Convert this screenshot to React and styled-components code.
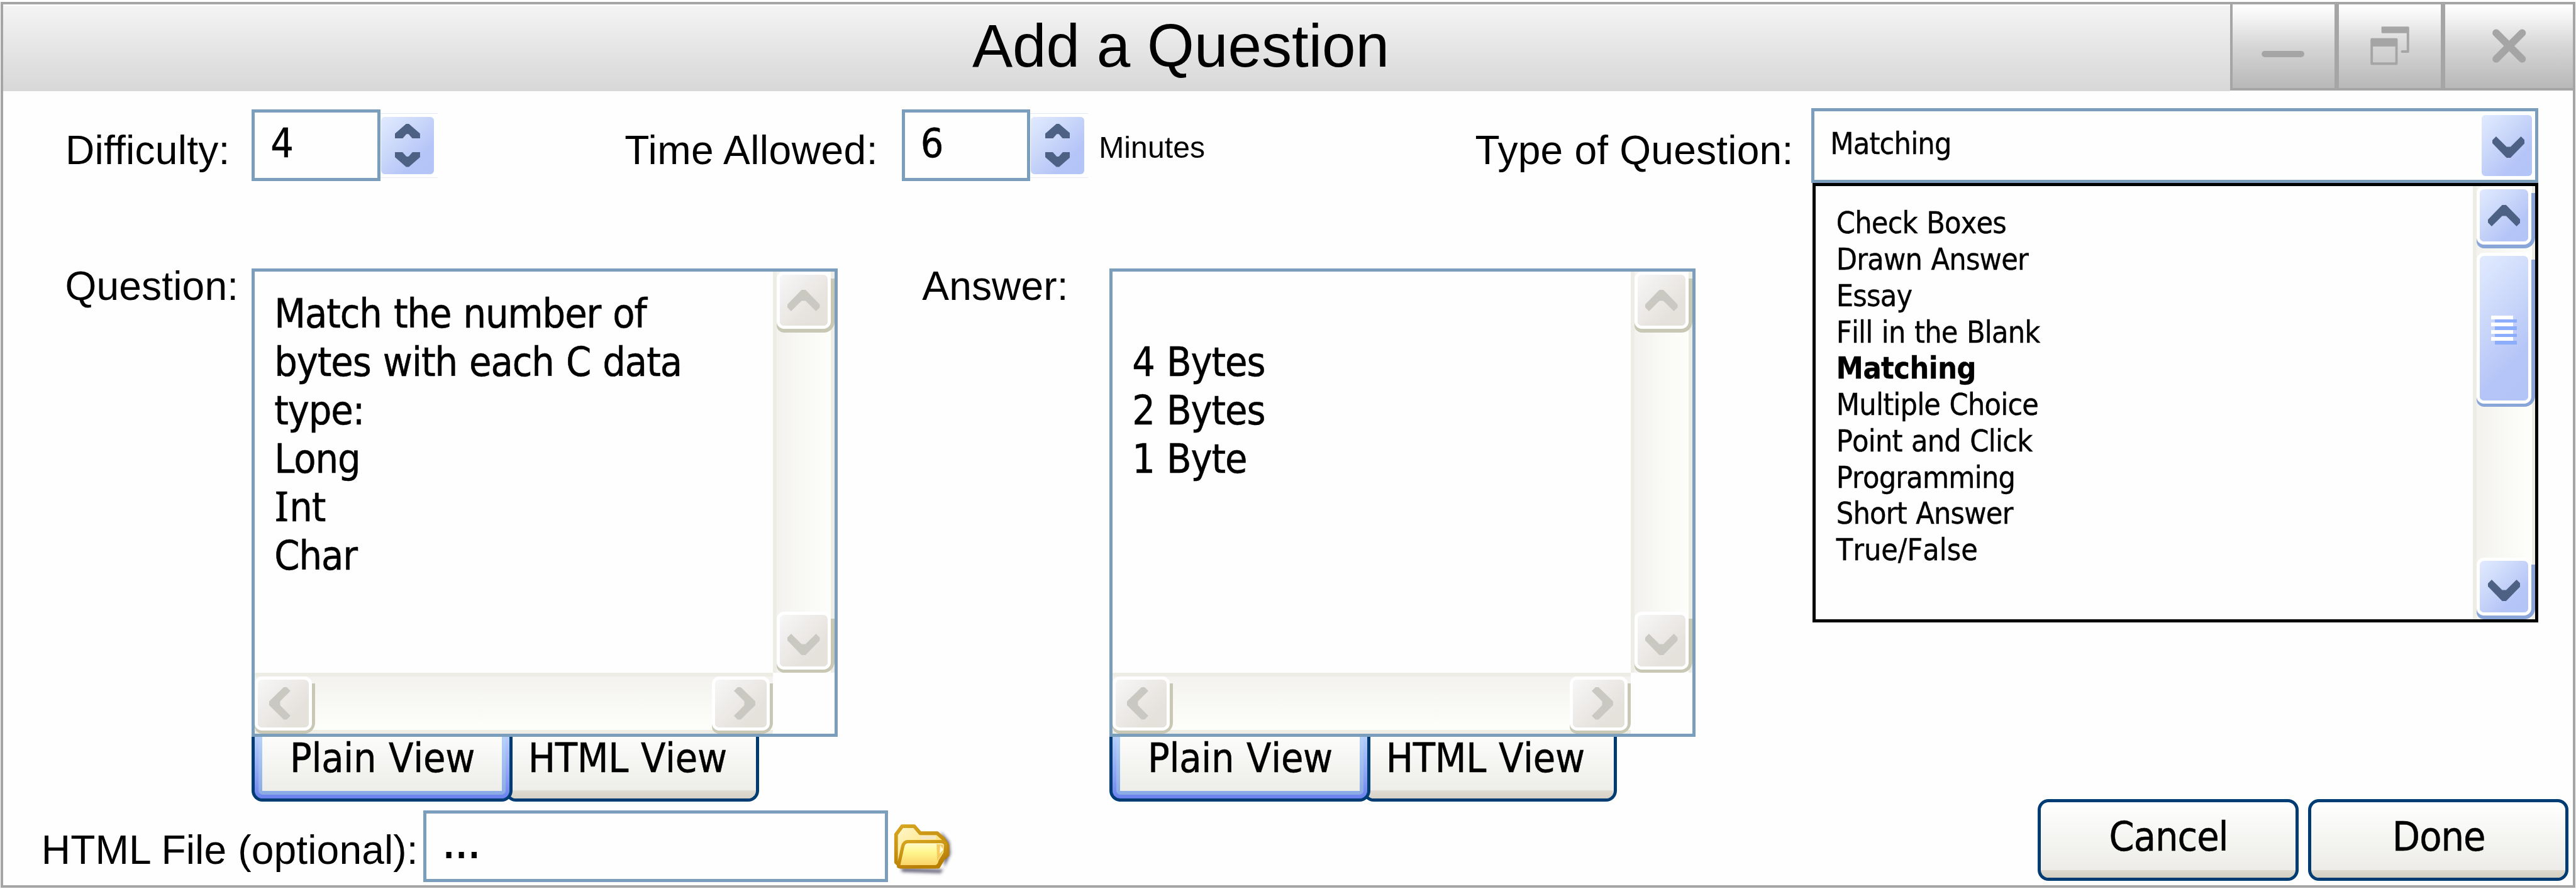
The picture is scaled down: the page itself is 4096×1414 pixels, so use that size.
import React from "react";
import styled, { createGlobalStyle, css } from "styled-components";

/* Design units: the dialog is laid out on a 4257-unit wide sheet. */
const SCALE = 4096 / 4257;
const u = (n) => `${(n * SCALE).toFixed(3)}px`;

const ARIAL = `"Liberation Sans", Arial, sans-serif`;
const TAHOMA = `"DejaVu Sans Condensed", "DejaVu Sans", sans-serif`;

const GlobalStyle = createGlobalStyle`
  *, *::before, *::after { box-sizing: border-box; }
  body { margin: 0; background: #fefefe; overflow: hidden; }
  svg { display: block; }
`;

const tahoma = css`
  font-family: ${TAHOMA};
  font-stretch: condensed;
  font-kerning: none;
  letter-spacing: -0.017em;
  word-spacing: 0.03em;
  -webkit-text-stroke: 0.008em #000;
  color: #000;
  white-space: pre;
`;

const Window = styled.main`
  width: 4094px;
  height: 1409px;
  margin: 3px 1px 2px;
  border: 4px solid #a5a5a5;
  background: #fefefe;
  display: flex;
  flex-direction: column;
`;

/* ---------- title bar ---------- */

const TitleBar = styled.header`
  height: ${u(143.7)};
  flex: none;
  display: flex;
  align-items: flex-start;
`;

const TitleFill = styled.div`
  flex: 1;
  height: 100%;
  border-top: 2px solid #fff;
  background: linear-gradient(#f4f4f4, #d7d7d7);
`;

const Title = styled.h1`
  margin: ${u(6)} 0 0 ${u(1601.5)};
  font: 400 ${u(100)} / ${u(120)} ${ARIAL};
  color: #000;
  white-space: nowrap;
`;

const WindowButton = styled.div`
  width: ${(p) => u(p.$w)};
  height: ${u(142.4)};
  border-left: ${(p) => p.$edge}px solid #a5a5a5;
  border-bottom: 4px solid #a5a5a5;
  background: linear-gradient(#fff 0%, #f4f4f4 15%, #d6d6d6 50%, #b8b8b8 100%);
`;

/* ---------- rows ---------- */

const Row = styled.section`
  display: flex;
  align-items: flex-start;
  flex: none;
  height: ${(p) => u(p.$h)};
  padding-left: ${(p) => u(p.$left)};
`;

const Label = styled.label`
  flex: none;
  width: ${(p) => u(p.$w)};
  margin-top: ${(p) => u(p.$top || 0)};
  margin-left: ${(p) => u(p.$gap || 0)};
  font: 400 ${(p) => u(p.$size || 66.67)} / ${(p) => u((p.$size || 66.67) * 1.2)} ${ARIAL};
  letter-spacing: ${(p) => p.$tracking || 0.002}em;
  color: #000;
  white-space: nowrap;
`;

const Field = styled.div`
  ${tahoma}
  flex: none;
  width: ${(p) => u(p.$w)};
  height: ${u(118.3)};
  margin-top: ${(p) => u(p.$top)};
  padding: ${(p) => u(p.$pad)} 0 0 ${(p) => u(p.$indent)};
  border: 5px solid #7b9ebd;
  background: #fefefe;
  font-size: ${u(66.67)};
  line-height: ${u(80)};
`;

const FileField = styled(Field)`
  letter-spacing: 0.03em;
  -webkit-text-stroke: 0.035em #000;
`;

const Stepper = styled.div`
  flex: none;
  width: ${u(95)};
  height: ${u(107)};
  margin-top: ${u(36)};
  padding: ${u(5)} ${u(6.3)} 0 ${u(0.8)};
  border-top: 1px solid #dfe7f8;
  border-bottom: 1px solid #e8ebf6;
`;

const blueFace = "linear-gradient(135deg, #e1eafe 0%, #cbd8fa 38%, #b5c5f7 72%, #b3c4f6 100%)";

const StepperFace = styled.div`
  height: ${u(95)};
  border-radius: ${u(6)};
  background: ${blueFace};
  display: flex;
  flex-direction: column;
  align-items: center;
  justify-content: space-between;
  padding: ${u(11.7)} 0 ${u(12)};
`;

/* ---------- combo box ---------- */

const Combo = styled.div`
  position: relative;
  flex: none;
  width: ${u(1202)};
  margin-top: ${u(27.4)};
`;

const ComboField = styled.div`
  ${tahoma}
  display: flex;
  justify-content: space-between;
  height: ${u(124.5)};
  padding: ${u(7)} ${u(6)} ${u(6)} ${u(26.3)};
  border: 5px solid #7b9ebd;
  background: #fefefe;
  font-size: ${u(50)};
  line-height: ${u(60)};
`;

const ComboValue = styled.span`
  margin-top: ${u(17.6)};
`;

const ComboButton = styled.div`
  width: ${u(83)};
  height: ${u(100.4)};
  border-radius: ${u(6)};
  background: ${blueFace};
  padding: ${u(35.3)} 0 0 ${u(17.4)};
`;

const Menu = styled.div`
  position: absolute;
  top: ${u(124.5)};
  left: ${u(2.5)};
  right: 0;
  height: ${u(725.9)};
  border: 5px solid #000;
  background: #fefefe;
  display: flex;
  justify-content: space-between;
`;

const Options = styled.ul`
  ${tahoma}
  list-style: none;
  margin: 0;
  padding: ${u(31.2)} 0 0 ${u(33.8)};
  font-size: ${u(50)};
  line-height: ${u(60)};
`;

const Option = styled.li`
  font-weight: ${(p) => (p.$selected ? 700 : 400)};
  letter-spacing: ${(p) => (p.$tracking === undefined ? "inherit" : `${p.$tracking}em`)};
`;

/* ---------- scroll bars ---------- */

const ScrollBar = styled.div`
  flex: none;
  display: flex;
  justify-content: space-between;
  ${(p) =>
    p.$horizontal
      ? css`
          width: ${u(856.5)};
          height: ${u(101)};
          padding-top: ${u(6)};
          background: linear-gradient(
            #eeede5 ${u(6)}, #f3f2ee ${u(6)}, #fdfefa ${u(90)}, #fdfefa ${u(95)}, #eeede5 ${u(95)}
          );
        `
      : css`
          flex-direction: column;
          width: ${u(p.$w || 101.5)};
          height: 100%;
          padding-left: ${u(6)};
          background: linear-gradient(
            to right,
            #eeede5 ${u(6)}, #f3f2ee ${u(6)}, #fdfefa ${u(90)}, #fdfefa ${u((p.$w || 101.5) - 6)},
            #eeede5 ${u((p.$w || 101.5) - 6)}
          );
        `}
`;

const ScrollButton = styled.div`
  flex: none;
  width: ${(p) => u(p.$w || 95)};
  height: ${(p) => u(p.$h || 101)};
  padding: 0 ${u(5.7)} ${u(5.7)} 0;
  border-radius: 0 0 ${u(18)} ${u(12)};
  margin-top: ${(p) => u(p.$gap || 0)};
  margin-bottom: ${(p) => (p.$push ? "auto" : 0)};
  background: linear-gradient(transparent ${u(11.7)}, ${(p) => (p.$active ? "#8aa6d9" : "#c8c8b5")} ${u(11.7)});
`;

const FACE_NUDGE = {
  down: `padding-top: ${u(12.6)};`,
  left: `padding-right: ${u(12)};`,
  right: `padding-left: ${u(13)};`,
};

const ScrollFace = styled.div`
  width: 100%;
  height: 100%;
  border: ${u(6)} solid #fff;
  border-radius: ${u(12)};
  background: ${(p) =>
      p.$active ? blueFace : "linear-gradient(135deg, #f7f7f7 0%, #ebe8e5 50%, #e5e2dc 75%, #e5e2dc 100%)"}
    padding-box;
  display: flex;
  align-items: center;
  justify-content: center;
  ${(p) => FACE_NUDGE[p.$dir] || ""}
`;

const Grip = styled.div`
  display: flex;
  flex-direction: column;
  margin: ${u(6)} ${u(0.5)} 0 0;
`;

const GripLine = styled.i`
  width: ${u(36.5)};
  height: ${u(5.98)};
  margin-left: ${(p) => u(p.$dark ? 6 : 0)};
  margin-right: ${(p) => u(p.$dark ? 0 : 6)};
  background: ${(p) => (p.$dark ? "#8cadfb" : "#fff")};
`;

/* ---------- text editors ---------- */

const Editor = styled.div`
  flex: none;
  width: ${u(968.5)};
  margin-top: ${u(10.6)};
`;

const EditorBox = styled.div`
  height: ${u(775)};
  border: 5px solid #7b9ebd;
  background: #fefefe;
  display: flex;
  flex-direction: column;
`;

const EditorMain = styled.div`
  height: ${u(663.5)};
  display: flex;
  justify-content: space-between;
`;

const EditorText = styled.div`
  ${tahoma}
  padding: ${u(31)} 0 0 ${u(32.2)};
  font-size: ${u(66.67)};
  line-height: ${u(79.9)};
`;

const Line = styled.div`
  height: ${u(79.9)};
`;

const SerifI = styled.span`
  font-family: "Noto Sans", sans-serif;
  font-stretch: normal;
  font-size: 1.02em;
  line-height: 0;
  margin-left: 0.01em;
  letter-spacing: 0;
`;

const Rest = styled.span`
  margin-left: 0.02em;
`;

const Tabs = styled.div`
  display: flex;
`;

const Tab = styled.div`
  ${tahoma}
  position: relative;
  flex: none;
  height: ${u(106.3)};
  border: 5px solid #003c74;
  border-top: 0;
  border-radius: 0 0 ${u(18)} ${u(18)};
  font-size: ${u(66.67)};
  line-height: ${u(70)};
  letter-spacing: -0.005em;
`;

const ActiveTab = styled(Tab)`
  z-index: 1;
  width: ${u(431)};
  padding: 0 ${u(6)} ${u(6)};
  background: linear-gradient(#b6cdfb, #8fa4f6 60%, #6b82ee);
`;

const ActiveRing = styled.div`
  height: 100%;
  padding: 0 ${u(6)} ${u(6)};
  border-radius: 0 0 ${u(7)} ${u(7)};
  background: linear-gradient(#b6d2f9, #8aaae4);
`;

const ActiveFace = styled.div`
  height: 100%;
  padding-left: ${u(46)};
  background: linear-gradient(#fcfcfb, #edede9);
`;

const PlainTab = styled(Tab)`
  width: ${u(419)};
  margin-left: ${u(-12)};
  padding-left: ${u(32.6)};
  background: linear-gradient(#fcfcfb, #edede9 ${u(88.4)}, #e1dcd4 ${u(88.4)}, #d6d2c6);
`;

/* ---------- bottom row ---------- */

const FolderSlot = styled.div`
  flex: none;
  margin: ${u(36)} 0 0 ${u(7)};
`;

const Actions = styled.div`
  display: flex;
  gap: ${u(15.8)};
  margin-left: auto;
  margin-right: ${u(7)};
`;

const PushButton = styled.button`
  ${tahoma}
  width: ${u(430.6)};
  height: ${u(135.6)};
  padding: 0 0 ${u(9.5)} ${u(1)};
  border: 5px solid #003c74;
  border-radius: ${u(18)};
  background: linear-gradient(#fff, #f4f4f1 50%, #edece8 ${u(112)}, #dedacf ${u(112)}, #d3cfc3);
  font-size: ${u(66.67)};
  line-height: ${u(80)};
  text-align: center;
`;

/* ---------- drawings ---------- */

const ARROW = "0,11.2 0,6.2 6.2,0 23.5,17.2 30,17.2 47.3,0 53.5,6.2 53.5,11.2 30,35.3 23.5,35.3";
const TURN = { down: 0, up: 180, left: 90, right: 270 };

function Arrow({ dir, color }) {
  const side = dir === "left" || dir === "right";
  const w = side ? 35.3 : 53.5;
  const h = side ? 53.5 : 35.3;
  return (
    <svg width={w * SCALE} height={h * SCALE} viewBox={`${-w / 2} ${-h / 2} ${w} ${h}`}>
      <g transform={`rotate(${TURN[dir]})`}>
        <polygon points={ARROW} fill={color} transform="translate(-26.75 -17.65)" />
      </g>
    </svg>
  );
}

function StepArrow({ down }) {
  return (
    <svg width={41.5 * SCALE} height={24.3 * SCALE} viewBox="0 0 41.5 24.3">
      <polygon
        points="0,16 18.5,0 23,0 41.5,16 41.5,24.3 29,24.3 22.5,17 19,17 12.5,24.3 0,24.3"
        fill="#4d6185"
        transform={down ? "matrix(1 0 0 -1 0 24.3)" : undefined}
      />
    </svg>
  );
}

function MinimizeGlyph() {
  return (
    <svg width="100%" height="100%" viewBox="3689 7.3 170 138" preserveAspectRatio="xMinYMin meet">
      <rect x="3737.5" y="84.8" width="71" height="10.7" rx="5.3" fill="#a5a5a5" />
    </svg>
  );
}

function RestoreGlyph() {
  return (
    <svg width="100%" height="100%" viewBox="3864 7.3 170 138" preserveAspectRatio="xMinYMin meet">
      <path
        d="M3936.5 44.2h43a1.8 1.8 0 0 1 1.8 1.8v40.4a1.8 1.8 0 0 1-1.8 1.8h-10a2.1 2.1 0 0 1 0-4.2h7.7V55.3h-40.7a1.5 1.5 0 0 1-1.5-1.5v-8.1a1.5 1.5 0 0 1 1.5-1.5z"
        fill="#a5a5a5"
      />
      <path
        fillRule="evenodd"
        d="M3918.5 63.8h41.8a1.8 1.8 0 0 1 1.8 1.8v41a1.8 1.8 0 0 1-1.8 1.8h-41.8a1.8 1.8 0 0 1-1.8-1.8v-41a1.8 1.8 0 0 1 1.8-1.8zM3920.8 77.7v26.4h37.3V77.7z"
        fill="#a5a5a5"
      />
    </svg>
  );
}

function CloseGlyph() {
  return (
    <svg width="100%" height="100%" viewBox="4040.6 7.3 213 138" preserveAspectRatio="xMinYMin meet">
      <path d="M4125.5 54.9L4168.8 98.3M4168.8 54.9L4125.5 98.3" stroke="#a5a5a5" strokeWidth="12.4" strokeLinecap="round" />
    </svg>
  );
}

function FolderIcon() {
  return (
    <svg width={102 * SCALE} height={92 * SCALE} viewBox="0 0 102 92">
      <defs>
        <linearGradient id="folderBack" x1="0" y1="0" x2="1" y2="1">
          <stop offset="0" stopColor="#fff6cf" />
          <stop offset="0.5" stopColor="#fde98d" />
          <stop offset="1" stopColor="#efb13c" />
        </linearGradient>
        <linearGradient id="folderFront" x1="0" y1="0" x2="0" y2="1">
          <stop offset="0" stopColor="#fffbd6" />
          <stop offset="0.4" stopColor="#fff790" />
          <stop offset="1" stopColor="#fbcf64" />
        </linearGradient>
        <linearGradient id="folderEdge" x1="0" y1="0" x2="0.4" y2="1">
          <stop offset="0" stopColor="#d8a520" />
          <stop offset="1" stopColor="#b87f06" />
        </linearGradient>
        <filter id="folderShadow" x="-20%" y="-20%" width="140%" height="150%">
          <feGaussianBlur stdDeviation="3" />
        </filter>
        <filter id="folderSoft">
          <feGaussianBlur stdDeviation="0.8" />
        </filter>
      </defs>
      <path d="M14 77L84 80L96 54L94 34L80 18L86 76L80 86L16 84z" fill="#3f3d58" opacity="0.8" filter="url(#folderShadow)" />
      <g filter="url(#folderSoft)">
        <path
          d="M6 68V22L16 8.500H36L46 20H74L84 29L91 40V56L84 62L76 75.500H14z"
          fill="url(#folderBack)"
          stroke="url(#folderEdge)"
          strokeWidth="6"
          strokeLinejoin="round"
        />
        <path d="M46 27H72" stroke="#f3e7c4" strokeWidth="6" />
        <path
          d="M10 74L17 42Q19 34.500 25 34H80Q86 34 88 39L87 53L79 66Q77 75 71 75.500H15Q9 76 10 74z"
          fill="url(#folderFront)"
          stroke="url(#folderEdge)"
          strokeWidth="5.5"
          strokeLinejoin="round"
        />
        <path d="M73 38L84 39L83 52L74 66z" fill="#f3c455" opacity="0.85" />
        <path d="M79 40L84 47L78 54z" fill="#fffbe0" />
      </g>
    </svg>
  );
}

/* ---------- composed parts ---------- */

const GREY = "#c9c9c2";
const NAVY = "#4d6185";

function ArrowButton({ dir, active, w, h }) {
  return (
    <ScrollButton $active={active} $w={w} $h={h}>
      <ScrollFace $active={active} $dir={dir}>
        <Arrow dir={dir} color={active ? NAVY : GREY} />
      </ScrollFace>
    </ScrollButton>
  );
}

function NumberField({ value }) {
  return (
    <>
      <Field $w={212.7} $top={30.3} $pad={11} $indent={26}>{value}</Field>
      <Stepper>
        <StepperFace>
          <StepArrow />
          <StepArrow down />
        </StepperFace>
      </Stepper>
    </>
  );
}

function TextEditor({ lines }) {
  return (
    <Editor>
      <EditorBox>
        <EditorMain>
          <EditorText>
            {lines.map((line, i) => (
              <Line key={i}>
                {line.startsWith("I") ? (
                  <>
                    <SerifI>I</SerifI>
                    <Rest>{line.slice(1)}</Rest>
                  </>
                ) : (
                  line
                )}
              </Line>
            ))}
          </EditorText>
          <ScrollBar>
            <ArrowButton dir="up" />
            <ArrowButton dir="down" />
          </ScrollBar>
        </EditorMain>
        <ScrollBar $horizontal>
          <ArrowButton dir="left" w={99.7} h={95} />
          <ArrowButton dir="right" w={100.7} h={95} />
        </ScrollBar>
      </EditorBox>
      <Tabs>
        <ActiveTab>
          <ActiveRing>
            <ActiveFace>Plain View</ActiveFace>
          </ActiveRing>
        </ActiveTab>
        <PlainTab>HTML View</PlainTab>
      </Tabs>
    </Editor>
  );
}

const QUESTION = ["Match the number of", "bytes with each C data", "type:", "Long", "Int", "Char"];
const ANSWER = ["", "4 Bytes", "2 Bytes", "1 Byte"];

const TYPES = [
  { name: "Check Boxes" },
  { name: "Drawn Answer" },
  { name: "Essay" },
  { name: "Fill in the Blank" },
  { name: "Matching", selected: true, tracking: -0.01 },
  { name: "Multiple Choice" },
  { name: "Point and Click" },
  { name: "Programming" },
  { name: "Short Answer" },
  { name: "True/False", tracking: -0.001 },
];

export default function App() {
  return (
    <>
      <GlobalStyle />
      <Window>
        <TitleBar>
          <TitleFill><Title>Add a Question</Title></TitleFill>
          <WindowButton $w={172.6} $edge={4}><MinimizeGlyph /></WindowButton>
          <WindowButton $w={175.6} $edge={7}><RestoreGlyph /></WindowButton>
          <WindowButton $w={218.6} $edge={7}><CloseGlyph /></WindowButton>
        </TitleBar>

        <Row $h={281.9} $left={102.8}>
          <Label $w={308} $top={58.2} $tracking={0.004}>Difficulty:</Label>
          <NumberField value="4" />
          <Label $w={457.8} $top={58.2} $gap={308.7} $tracking={0.007}>Time Allowed:</Label>
          <NumberField value="6" />
          <Label $w={200} $top={63} $gap={18} $size={50}>Minutes</Label>
          <Label $w={555.3} $top={58.2} $gap={422} $tracking={0.003}>Type of Question:</Label>
          <Combo>
            <ComboField>
              <ComboValue>Matching</ComboValue>
              <ComboButton><Arrow dir="down" color={NAVY} /></ComboButton>
            </ComboField>
            <Menu>
              <Options>
                {TYPES.map((t) => (
                  <Option key={t.name} $selected={t.selected} $tracking={t.tracking}>{t.name}</Option>
                ))}
              </Options>
              <ScrollBar $w={103.2}>
                <ArrowButton dir="up" active w={96.7} h={102} />
                <ScrollButton $active $w={96.7} $h={255} $gap={7.7} $push>
                  <ScrollFace $active>
                    <Grip>
                      {[0, 1, 2, 3].map((i) => (
                        <React.Fragment key={i}>
                          <GripLine />
                          <GripLine $dark />
                        </React.Fragment>
                      ))}
                    </Grip>
                  </ScrollFace>
                </ScrollButton>
                <ArrowButton dir="down" active w={96.7} h={102} />
              </ScrollBar>
            </Menu>
          </Combo>
        </Row>

        <Row $h={888.1} $left={102.4}>
          <Label $w={308.4} $top={1}>Question:</Label>
          <TextEditor lines={QUESTION} />
          <Label $w={309.7} $top={1} $gap={139.4}>Answer:</Label>
          <TextEditor lines={ANSWER} />
        </Row>

        <Row $h={140} $left={63.2}>
          <Label $w={631} $top={45.2}>HTML File (optional):</Label>
          <FileField $w={768} $top={18.8} $pad={10.4} $indent={27.5}>...</FileField>
          <FolderSlot><FolderIcon /></FolderSlot>
          <Actions>
            <PushButton>Cancel</PushButton>
            <PushButton>Done</PushButton>
          </Actions>
        </Row>
      </Window>
    </>
  );
}
